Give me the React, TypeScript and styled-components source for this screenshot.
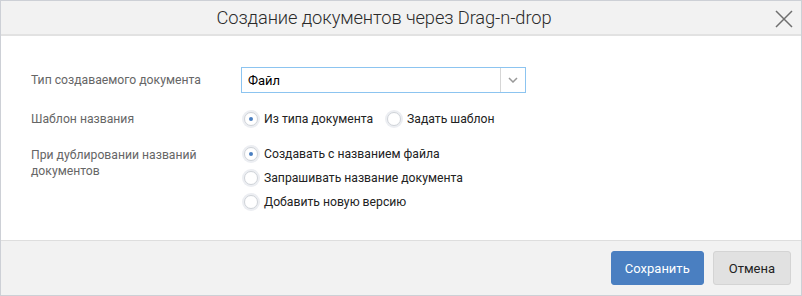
import React, { useState } from "react";
import styled, { createGlobalStyle } from "styled-components";

const Global = createGlobalStyle`
  html, body { margin: 0; padding: 0; background: #fff; }
  body { font-family: Roboto, "Liberation Sans", Arial, sans-serif; }
`;

const Dialog = styled.div`
  width: 802px;
  height: 296px;
  box-sizing: border-box;
  border: 1px solid #cdd0d6;
  display: flex;
  flex-direction: column;
  background: #fff;
`;

const Header = styled.div`
  height: 35px;
  box-sizing: border-box;
  flex: none;
  background: #f2f2f2;
  border-bottom: 2px solid #e2e2e2;
  display: flex;
  align-items: center;
  justify-content: center;
  padding-right: 34px;
  position: relative;
`;

const Title = styled.div`
  font-size: 18.3px;
  font-weight: 300;
  color: #2b2b2b;
  letter-spacing: -0.1px;
`;

const Close = styled.button`
  position: absolute;
  right: 8px;
  top: 9px;
  width: 18px;
  height: 18px;
  padding: 0;
  border: none;
  background: none;
  cursor: pointer;
  display: flex;
`;

const Body = styled.div`
  flex: 1;
  padding: 31px 30px 0 30px;
  display: flex;
  flex-direction: column;
`;

const Row = styled.div<{ $mt?: number }>`
  display: grid;
  grid-template-columns: 210px 1fr;
  margin-top: ${(p) => p.$mt ?? 0}px;
  align-items: start;
`;

const Label = styled.div<{ $pt?: number }>`
  font-size: 12.2px;
  color: #666;
  line-height: 16px;
  padding-top: ${(p) => p.$pt ?? 0}px;
`;

const Select = styled.div`
  width: 285px;
  height: 26px;
  box-sizing: border-box;
  border: 1px solid #8cc4f0;
  display: flex;
  align-items: stretch;
  background: #fff;
`;

const SelectValue = styled.div`
  flex: 1;
  font-size: 13px;
  color: #000;
  padding-left: 6px;
  display: flex;
  align-items: center;
`;

const SelectArrow = styled.div`
  width: 24px;
  border-left: 1px solid #d6d6d6;
  display: flex;
  align-items: center;
  justify-content: center;
`;

const RadioGroup = styled.div<{ $dir: "row" | "column" }>`
  display: flex;
  flex-direction: ${(p) => p.$dir};
  gap: ${(p) => (p.$dir === "row" ? "14px" : "6px")};
  margin-left: 3px;
`;

const RadioItem = styled.label`
  display: flex;
  align-items: center;
  gap: 6px;
  font-size: 12.2px;
  color: #222;
  cursor: pointer;
  height: 18px;
`;

const RadioCircle = styled.span<{ $on: boolean }>`
  width: 14px;
  height: 14px;
  box-sizing: border-box;
  border-radius: 50%;
  border: 1px solid #cfd3d8;
  background: #fff;
  box-shadow: 0 0 0 2px #eceef2;
  display: flex;
  align-items: center;
  justify-content: center;
  flex: none;
  &::after {
    content: "";
    width: 4px;
    height: 4px;
    border-radius: 50%;
    background: #4a7fc1;
    display: ${(p) => (p.$on ? "block" : "none")};
  }
`;

const Footer = styled.div`
  height: 55px;
  box-sizing: border-box;
  flex: none;
  background: #f2f2f2;
  border-top: 1px solid #dedede;
  display: flex;
  align-items: center;
  justify-content: flex-end;
  gap: 9px;
  padding-right: 10px;
`;

const Button = styled.button<{ $primary?: boolean }>`
  height: 34px;
  padding: 0 ${(p) => (p.$primary ? "13px" : "15px")};
  border-radius: 3px;
  font-family: Roboto, "Liberation Sans", Arial, sans-serif;
  font-size: 13px;
  cursor: pointer;
  border: 1px solid ${(p) => (p.$primary ? "#4a7fc1" : "#d4d4d4")};
  background: ${(p) => (p.$primary ? "#4a7fc1" : "#e1e1e1")};
  color: ${(p) => (p.$primary ? "#fff" : "#222")};
`;

type Opt = { id: string; text: string };

const Radios = ({
  options,
  dir,
}: {
  options: Opt[];
  dir: "row" | "column";
}) => {
  const [value, setValue] = useState(options[0].id);
  return (
    <RadioGroup $dir={dir}>
      {options.map((o) => (
        <RadioItem key={o.id} onClick={() => setValue(o.id)}>
          <RadioCircle $on={value === o.id} />
          {o.text}
        </RadioItem>
      ))}
    </RadioGroup>
  );
};

export default function App() {
  return (
    <>
      <Global />
      <Dialog>
        <Header>
          <Title>Создание документов через Drag-n-drop</Title>
          <Close aria-label="Закрыть">
            <svg width="18" height="18" viewBox="0 0 18 18">
              <path
                d="M1 1 L17 17 M17 1 L1 17"
                stroke="#6f6f6f"
                strokeWidth="1.5"
                fill="none"
              />
            </svg>
          </Close>
        </Header>
        <Body>
          <Row>
            <Label $pt={5}>Тип создаваемого документа</Label>
            <Select>
              <SelectValue>Файл</SelectValue>
              <SelectArrow>
                <svg width="10" height="6" viewBox="0 0 10 6">
                  <path
                    d="M1 1 L5 5 L9 1"
                    stroke="#999"
                    strokeWidth="1.5"
                    fill="none"
                  />
                </svg>
              </SelectArrow>
            </Select>
          </Row>
          <Row $mt={17}>
            <Label $pt={1}>Шаблон названия</Label>
            <Radios
              dir="row"
              options={[
                { id: "type", text: "Из типа документа" },
                { id: "tpl", text: "Задать шаблон" },
              ]}
            />
          </Row>
          <Row $mt={17}>
            <Label $pt={2}>
              При дублировании названий
              <br />
              документов
            </Label>
            <Radios
              dir="column"
              options={[
                { id: "create", text: "Создавать с названием файла" },
                { id: "ask", text: "Запрашивать название документа" },
                { id: "ver", text: "Добавить новую версию" },
              ]}
            />
          </Row>
        </Body>
        <Footer>
          <Button $primary>Сохранить</Button>
          <Button>Отмена</Button>
        </Footer>
      </Dialog>
    </>
  );
}
